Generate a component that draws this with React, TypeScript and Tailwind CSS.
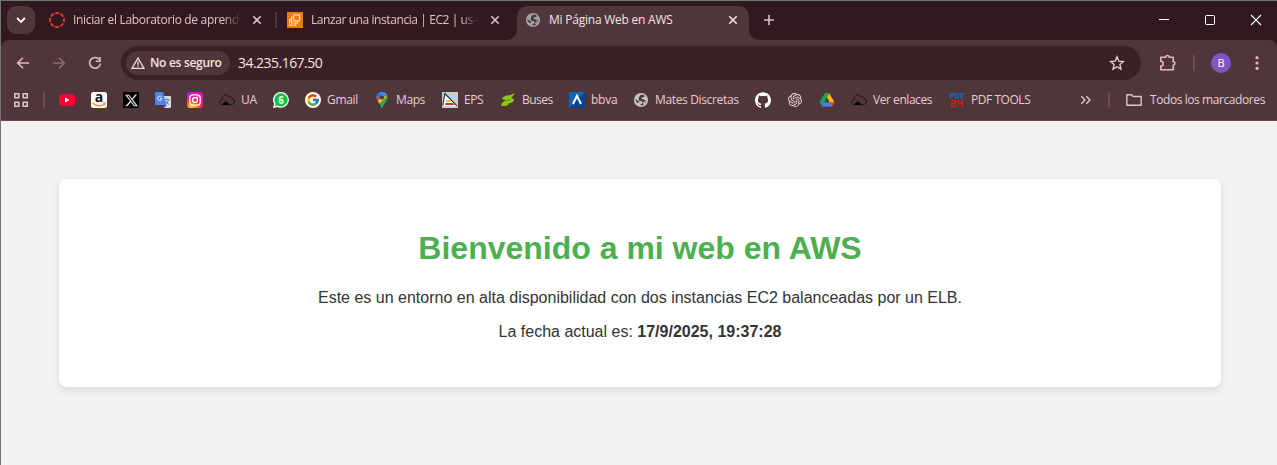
import type { ReactNode } from "react";
import { SiGithub, SiOpenai, SiX } from "react-icons/si";
import { FcGoogle } from "react-icons/fc";

const Globe = ({ fill, hole }: { fill: string; hole: string }) => (
  <svg viewBox="0 0 16 16" className="size-4 shrink-0">
    <circle cx="8" cy="8" r="7.1" fill={fill} />
    <path d="M8.400 2.700C10 2.600 11.300 3.100 11.800 3.900 11.500 5 10.200 4.900 9.300 5.200 8.600 5.500 8.900 6.300 8.100 6.700 8.900 7.200 10.400 7 11.200 7.700 12 8.500 13 8.300 13.400 8.900 12.900 10.400 11.200 12.700 9 13.400 8 13.500 7.300 13.200 7.500 12.500 8.200 12.200 9.500 11.800 9.600 10.600 9.600 9.500 8.600 9.200 7.500 9.100 6.300 9 5.500 8.300 5.700 7.100 6 5.600 6.200 3.600 8.400 2.700Z" fill={hole} />
    <path d="M2.600 7 4.900 8.900 6.300 9.600 6 10.600 4.700 10.900C3.200 10.300 2.400 8.500 2.600 7Z" fill={hole} />
    <path d="M10.800 9.800 13.200 8.600 11.800 11.800 9.800 12.600Z" fill={fill} />
  </svg>
);

const Cloud = () => (
  <svg viewBox="0 0 16 16" className="size-4 shrink-0">
    <path d="M3.2 12.6C1.4 12.4.5 11.2.6 9.9.7 8.5 1.8 7.7 3 7.7 2.8 5.2 4.4 3 6.6 2.900 8.2 2.8 9.2 3.6 9.9 4.8 11.6 4.2 12.8 5.2 13 6.7 14.5 6.9 15.5 8 15.4 9.6 15.3 11.4 14 12.5 12.4 12.6Z" fill="none" stroke="#20181a" strokeWidth="1" />
    <path d="M3.6 13 4.4 10.8 6 10.2 7.4 9.2 8.6 11 9.8 11.6 10 13Z" fill="#000" />
  </svg>
);

const CloseX = ({ color }: { color: string }) => (
  <svg viewBox="0 0 16 16" className="size-4 shrink-0">
    <path d="m4.3 4.3 7.4 7.4m0-7.4-7.4 7.4" stroke={color} strokeWidth="1.6" />
  </svg>
);

const YouTube = () => (
  <svg viewBox="0 0 16 16" className="size-4">
    <rect y="2.2" width="16" height="11.6" rx="3" fill="#ff0033" />
    <path d="M6 5.6v4.8L10.6 8Z" fill="#fff" />
  </svg>
);

const Amazon = () => (
  <svg viewBox="0 0 16 16" className="size-4">
    <rect width="16" height="16" rx="2.5" fill="#fff" />
    <text x="8" y="9.7" textAnchor="middle" fontSize="14" fontWeight="700" fill="#111" fontFamily="Open Sans, sans-serif">a</text>
    <path d="M1.5 10.800C5 14.600 10.500 14.700 13.600 12" fill="none" stroke="#ff9900" strokeWidth="1.5" />
    <path d="M11.6 11.2 14.3 10.9 13.7 13.4" fill="none" stroke="#ff9900" strokeWidth="1.1" />
  </svg>
);

const Twitter = () => (
  <span className="flex size-4 items-center justify-center bg-black text-[#d8d8d8]">
    <SiX size={13} />
  </span>
);

const Translate = () => (
  <svg viewBox="0 0 16 16" className="size-4">
    <path d="M6 4h9a1 1 0 0 1 1 1v10a1 1 0 0 1-1 1H9Z" fill="#dcdcdc" />
    <path d="M9.4 7.6h5.2M12 6.4v1.2M13.6 7.6c-.5 2.2-1.8 3.7-3.3 4.7M10.7 9c.7 1.5 1.8 2.6 3.2 3.4" fill="none" stroke="#657786" strokeWidth=".9" />
    <path d="M8 13h3.5L9.2 16Z" fill="#1b4fc0" />
    <path d="M1 0h7l3.5 13H1a1 1 0 0 1-1-1V1a1 1 0 0 1 1-1Z" fill="#4b87ee" />
    <path d="M6.6 5A2.2 2.2 0 1 0 7 6.7H4.9" fill="none" stroke="#e8f0ff" strokeWidth="1" />
  </svg>
);

const Instagram = () => (
  <svg viewBox="0 0 16 16" className="size-4">
    <defs>
      <radialGradient id="igWarm" cx=".28" cy="1.05" r="1.05">
        <stop offset="0" stopColor="#ffdc30" />
        <stop offset=".3" stopColor="#ff8a1c" />
        <stop offset=".6" stopColor="#ff1f5f" />
        <stop offset="1" stopColor="#e00cc8" />
      </radialGradient>
      <radialGradient id="igCool" cx="0" cy="0" r=".6">
        <stop offset="0" stopColor="#6a2cff" />
        <stop offset="1" stopColor="#c81cf0" stopOpacity="0" />
      </radialGradient>
    </defs>
    <rect width="16" height="16" rx="3.6" fill="url(#igWarm)" />
    <rect width="16" height="16" rx="3.6" fill="url(#igCool)" />
    <rect x="2.8" y="2.8" width="10.4" height="10.4" rx="3" fill="none" stroke="#fff" strokeWidth="1.3" />
    <circle cx="8" cy="8" r="2.5" fill="none" stroke="#fff" strokeWidth="1.3" />
    <circle cx="11" cy="5" r=".7" fill="#fff" />
  </svg>
);

const WhatsApp = () => (
  <svg viewBox="0 0 16 16" className="size-4">
    <path d="M8.1 0A7.9 7.9 0 1 1 4.5 15L0 16 1.1 11.8A7.9 7.9 0 0 1 8.1 0Z" fill="#fff" />
    <path d="M8.1 1.3A6.6 6.6 0 1 1 4.7 13.6L2 14.2 2.6 11.6A6.6 6.6 0 0 1 8.1 1.3Z" fill="#0fc144" />
    <text x="8.1" y="11.7" textAnchor="middle" fontSize="10" fontWeight="700" fill="#fff" fontFamily="Liberation Sans, sans-serif">6</text>
  </svg>
);

const Google = () => (
  <span className="flex size-4 items-center justify-center rounded-full bg-white">
    <FcGoogle size={14} />
  </span>
);

const Maps = () => (
  <svg viewBox="0 0 16 16" className="size-4">
    <defs>
      <clipPath id="pin">
        <path d="M8 0a5.5 5.5 0 0 1 5.5 5.5C13.500 9.200 9.400 11 8.700 15.300Q8 16.600 7.300 15.300C6.600 11 2.500 9.200 2.500 5.500A5.500 5.500 0 0 1 8 0Z" />
      </clipPath>
    </defs>
    <g clipPath="url(#pin)">
      <path d="M0 0h16v16H0Z" fill="#34a853" />
      <path d="M0 12 13 0H0Z" fill="#4285f4" />
      <path d="M2 2 4.600 1 8 4.500 5.500 7.500Z" fill="#1a73e8" />
      <path d="M2 3 6 6.500 3 9Z" fill="#ea4335" />
      <path d="M3 10.300 11.500.5 14 3 5.500 12.500Z" fill="#fbbc04" />
      <path d="M8 0h6v3.500L9.500 5Z" fill="#4285f4" />
      <path d="M5 12 14 3.500V16H5Z" fill="#34a853" />
    </g>
    <circle cx="8" cy="5.500" r="2" fill="#50353a" />
  </svg>
);

const Eps = () => (
  <svg viewBox="0 0 16 16" className="size-4">
    <path d="M0 0h16v16H0Z" fill="#c9ced2" />
    <path d="M2.800 1.500 15 13.800H.8Z" fill="#fff" />
    <path d="M.8 13.500 2.800 1.500 15 13.800" fill="none" stroke="#14304e" strokeWidth="1.100" />
    <path d="M4 8h4l1.500 1.700H3.700Z" fill="#f0b429" />
    <path d="M3.500 11h7.300l2 2H3.200Z" fill="#d03a08" />
  </svg>
);

const Bus = () => (
  <svg viewBox="0 0 16 16" className="size-4">
    <path d="M15 1.500C12.500 1 11.500 2.600 10 3.300 6.500 2.600 3 4.300 2.200 6.500 3 7.800 5 7.900 6.500 8.200 4 8.800 1.200 11 1.100 13.500 4.500 14.800 8.200 13.600 9.200 11.200 12 11.200 14 9.200 14 7.500 13 6.400 11.500 6.300 11.200 5.500 13 4.800 13.200 2.600 15 1.500Z" fill="#8cc80c" />
    <path d="m6.500 8.500 3.500-1" stroke="#50353a" strokeWidth=".6" />
  </svg>
);

const Bbva = () => (
  <svg viewBox="0 0 16 16" className="size-4">
    <path d="M0 0h16v16H0Z" fill="#04458d" />
    <path d="M0 0h16L0 16Z" fill="#1267b4" />
    <path d="m4 12 4-8.200 4 8.200" fill="none" stroke="#fff" strokeWidth="2" />
  </svg>
);

const Drive = () => (
  <svg viewBox="0 0 16 16" className="size-4">
    <path d="M5.600 1.500h4.800l5 8.700h-5Z" fill="#ffba00" />
    <path d="M5.600 1.500h4.800L3 14.300.6 10.200Z" fill="#12a75a" />
    <path d="M5.300 10.200h10.100L13 14.400H2.900Z" fill="#4285f4" />
    <path d="M10.400 10.200h5L13 14.400Z" fill="#ea4335" />
    <path d="m8 5.800 2.500 4.400H5.500Z" fill="#50353a" />
  </svg>
);

const Pdf24 = () => (
  <svg viewBox="0 0 16 16" className="size-4">
    <g fill="none" strokeWidth="1.200">
      <path d="M1.500 6.500V1.500h2.800v2.500H1.500M6.500 1.500v4.400h2.200l.8-.8V2.300l-.8-.8ZM12 6.500V1.500h3M12 4h2.600" stroke="#1170cc" />
      <path d="M2 8.700h4.500v2.800H2.700v3H7.300M9.500 8v3.700h4.500M13.200 8v7.300" stroke="#d5191d" strokeWidth="1.600" />
    </g>
  </svg>
);

type Mark = { icon: ReactNode; label?: string; box?: string };

const marks: Mark[] = [
  { icon: <YouTube /> },
  { icon: <Amazon /> },
  { icon: <Twitter /> },
  { icon: <Translate /> },
  { icon: <Instagram /> },
  { icon: <Cloud />, label: "UA", box: "w-4 tracking-[-0.2px]" },
  { icon: <WhatsApp /> },
  { icon: <Google />, label: "Gmail", box: "w-[31px] tracking-[-0.3px]" },
  { icon: <Maps />, label: "Maps", box: "w-[30px] tracking-[-0.4px]" },
  { icon: <Eps />, label: "EPS", box: "w-5 tracking-[-0.4px]" },
  { icon: <Bus />, label: "Buses", box: "w-[31px] tracking-[-0.5px]" },
  { icon: <Bbva />, label: "bbva", box: "w-[26px] tracking-[-0.25px]" },
  { icon: <Globe fill="#c3c5c8" hole="#50353a" />, label: "Mates Discretas", box: "w-[84px] tracking-[-0.35px]" },
  { icon: <SiGithub size={16} color="#fff" /> },
  { icon: <SiOpenai size={14} color="#e4dcdd" className="mx-px" /> },
  { icon: <Drive /> },
  { icon: <Cloud />, label: "Ver enlaces", box: "w-[60px] tracking-[-0.45px]" },
  { icon: <Pdf24 />, label: "PDF TOOLS", box: "w-[60px] tracking-[-0.45px]" },
];

const TabStrip = () => (
  <div className="flex h-[39px] items-center bg-[#32191f] pb-px text-[12px] text-[#e3c0c5]">
    <button className="ml-1.5 flex size-7 items-center justify-center rounded-[9px] bg-[#50353a]">
      <svg viewBox="0 0 16 16" className="size-4"><path d="m4.100 6 3.900 3.900L11.900 6" fill="none" stroke="#fff" strokeWidth="1.800" /></svg>
    </button>
    <div className="ml-3.5 flex w-[226px] items-center">
      <svg viewBox="0 0 16 16" className="size-4 shrink-0">
        <circle cx="8" cy="8" r="7" fill="none" stroke="#e23b2c" strokeWidth="2" strokeDasharray="4 1.498" strokeDashoffset="2" />
      </svg>
      <span className="ml-2 w-[168px] whitespace-nowrap tracking-[-0.33px] [mask-image:linear-gradient(to_right,#000_150px,transparent)]">Iniciar el Laboratorio de aprend</span>
      <span className="ml-2"><CloseX color="#e3c0c5" /></span>
    </div>
    <div className="h-4 w-0.5 bg-[#50353a]" />
    <div className="ml-2.5 flex w-[230px] items-center">
      <svg viewBox="0 0 16 16" className="size-4 shrink-0">
        <path d="M0 0h16v16H0Z" fill="#ed7d0b" />
        <g fill="none" stroke="#ffe2b8" strokeWidth="1.100">
          <rect x="6.700" y="2.900" width="6" height="6" rx=".8" />
          <path d="M6.700 5H4.600V11H10.700V9" />
          <path d="M4.600 7.200H2.800v6h6V11" />
        </g>
      </svg>
      <span className="ml-2 w-[168px] whitespace-nowrap tracking-[-0.42px] [mask-image:linear-gradient(to_right,#000_150px,transparent)]">Lanzar una instancia | EC2 | us-e</span>
      <span className="ml-2"><CloseX color="#e3c0c5" /></span>
    </div>
    <div className="-mb-px flex self-stretch">
      <div className="-ml-2.5 h-2.5 w-2.5 self-end bg-[radial-gradient(circle_at_0_0,transparent_9.500px,#50353a_10px)]" />
      <div className="mt-[5px] flex w-[232px] items-center rounded-t-[10px] bg-[#50353a] pb-[6px] pl-2 text-[#f6e3e6]">
        <Globe fill="#9aa0a6" hole="#50353a" />
        <span className="ml-2 w-[168px] whitespace-nowrap tracking-[-0.23px]">Mi Página Web en AWS</span>
        <span className="ml-2"><CloseX color="#f6e3e6" /></span>
      </div>
      <div className="h-2.5 w-2.5 self-end bg-[radial-gradient(circle_at_100%_0,transparent_9.500px,#50353a_10px)]" />
    </div>
    <svg viewBox="0 0 16 16" className="ml-0.5 size-4"><path d="M8 3v10M3 8h10" stroke="#e3b9c0" strokeWidth="1.600" /></svg>
    <div className="mr-[15px] ml-auto flex gap-[34px]">
      <svg viewBox="0 0 12 12" className="size-3"><path d="M1 5.500h10" stroke="#fff" /></svg>
      <svg viewBox="0 0 12 12" className="size-3"><rect x="1.500" y="1.500" width="9" height="9" rx=".8" fill="none" stroke="#fff" /></svg>
      <svg viewBox="0 0 12 12" className="size-3"><path d="m1 1 10 10m0-10L1 11" stroke="#fff" strokeWidth="1.100" /></svg>
    </div>
  </div>
);

const Toolbar = () => (
  <div className="bg-[#32191f]">
    <div className="flex h-[46px] items-center rounded-t-[8px] bg-[#50353a] pl-3.5">
      <div className="flex gap-5">
        <svg viewBox="0 0 16 16" className="size-4"><path d="M14 8H3M8 2.700 2.700 8 8 13.300" fill="none" stroke="#e3b9c0" strokeWidth="1.600" /></svg>
        <svg viewBox="0 0 16 16" className="size-4"><path d="M2 8h11M8 2.700 13.300 8 8 13.300" fill="none" stroke="#8a6c71" strokeWidth="1.600" /></svg>
        <svg viewBox="0 0 16 16" className="size-4">
          <path d="M12.300 4.500A5.400 5.400 0 1 0 13.400 8.600" fill="none" stroke="#e3b9c0" strokeWidth="1.600" />
          <path d="M13.800 2v5H8.800V5.500H12.200V2Z" fill="#e3b9c0" />
        </svg>
      </div>
      <div className="ml-[18px] flex h-[34px] w-[1020px] items-center rounded-full bg-[#3a2126] pl-[5px]">
        <div className="flex h-6 w-[104px] items-center rounded-full bg-[#50353a] pl-1">
          <svg viewBox="0 0 16 16" className="size-4"><path d="M8 3 14 13.300H2Z" fill="none" stroke="#efdfe1" strokeWidth="1.300" /><path d="M8 6.300v3.400M8 10.500V12" stroke="#efdfe1" strokeWidth="1.300" /></svg>
          <span className="ml-1 text-[12px] font-semibold whitespace-nowrap text-[#f6e3e6] tracking-[-0.3px]">No es seguro</span>
        </div>
        <span className="ml-2 pb-0.5 text-[14px] tracking-[-0.53px] text-[#f3e4e6]">34.235.167.50</span>
        <svg viewBox="0 0 16 16" className="mr-4 ml-auto size-4"><path d="m8 1.800 1.800 4.300 4.700.4-3.600 3 1.100 4.600L8 11.700l-4 2.400 1.100-4.600-3.600-3 4.700-.4Z" fill="none" stroke="#e6d5d7" strokeWidth="1.300" /></svg>
      </div>
      <svg viewBox="0 0 18 18" className="ml-[18px] size-[18px]">
        <path d="M1.800 3.200H6.800a1.700 1.700 0 0 1 3.400 0h4.100v4.600a1.600 1.600 0 0 1 0 3.200v4.700H1.800v-3.600a2.100 2.100 0 0 0 0-4.800Z" fill="none" stroke="#e3b9c0" strokeWidth="1.600" strokeLinejoin="round" />
      </svg>
      <div className="ml-4 h-4 w-0.5 bg-[#6b4c52]" />
      <div className="ml-4 flex size-5 items-center justify-center rounded-full bg-[#7e57c2] text-[11px] font-medium text-white">B</div>
      <svg viewBox="0 0 16 16" className="ml-[18px] size-4" fill="#e3b9c0"><circle cx="8" cy="2.700" r="1.600" /><circle cx="8" cy="8" r="1.600" /><circle cx="8" cy="13.300" r="1.600" /></svg>
    </div>
  </div>
);

const Bookmarks = () => (
  <div className="flex h-[35px] items-center border-b border-[#644a4f] bg-[#50353a] pb-[6px] pl-3 text-[12px] text-[#e6ced2]">
    <svg viewBox="0 0 16 16" className="size-4" fill="none" stroke="#dcc6c9" strokeWidth="1.600">
      <path d="M1.800 1.800h4v4h-4ZM10.200 1.800h4v4h-4ZM1.800 10.200h4v4h-4ZM10.200 10.200h4v4h-4Z" />
    </svg>
    <div className="ml-3.5 h-4 w-0.5 bg-[#6b4c52]" />
    <div className="ml-[14px] flex gap-4">
      {marks.map((m, i) => (
        <div key={i} className="flex h-4 items-center">
          {m.icon}
          {m.label && <span className={"ml-1.5 whitespace-nowrap " + m.box}>{m.label}</span>}
        </div>
      ))}
    </div>
    <svg viewBox="0 0 16 16" className="mr-3.5 ml-auto size-4"><path d="m3.300 4.300 3.700 3.700-3.700 3.700M8.300 4.300 12 8l-3.700 3.700" fill="none" stroke="#e0cccf" strokeWidth="1.400" /></svg>
    <div className="h-4 w-0.5 bg-[#6b4c52]" />
    <svg viewBox="0 0 16 16" className="ml-4 size-4"><path d="M.8 13.300V2.700h4.700l1.600 1.800h8.100v8.800Z" fill="none" stroke="#dcc6c9" strokeWidth="1.400" strokeLinejoin="round" /></svg>
    <span className="mr-3 ml-2 w-[115px] whitespace-nowrap tracking-[-0.42px]">Todos los marcadores</span>
  </div>
);

export default function App() {
  return (
    <div className="flex h-[465px] w-[1277px] flex-col overflow-hidden border-t border-l border-[#737573] bg-[#f3f3f3] font-['Open_Sans','Noto_Sans',sans-serif]">
      <TabStrip />
      <Toolbar />
      <Bookmarks />
      <main className="pt-[58px] pr-14 pl-[58px] text-center font-['Liberation_Sans',Arial,sans-serif] text-[16px] text-[#333]">
        <div className="h-[208px] rounded-lg bg-white pt-[51px] shadow-[0_4px_8px_rgba(0,0,0,0.1)]">
          <h1 className="text-[32px] leading-[37px] font-bold text-[#4caf50]">Bienvenido a mi web en AWS</h1>
          <p className="mt-[22px] leading-[18px]">Este es un entorno en alta disponibilidad con dos instancias EC2 balanceadas por un ELB.</p>
          <p className="mt-4 leading-[18px]">La fecha actual es: <strong>17/9/2025, 19:37:28</strong></p>
        </div>
      </main>
    </div>
  );
}
